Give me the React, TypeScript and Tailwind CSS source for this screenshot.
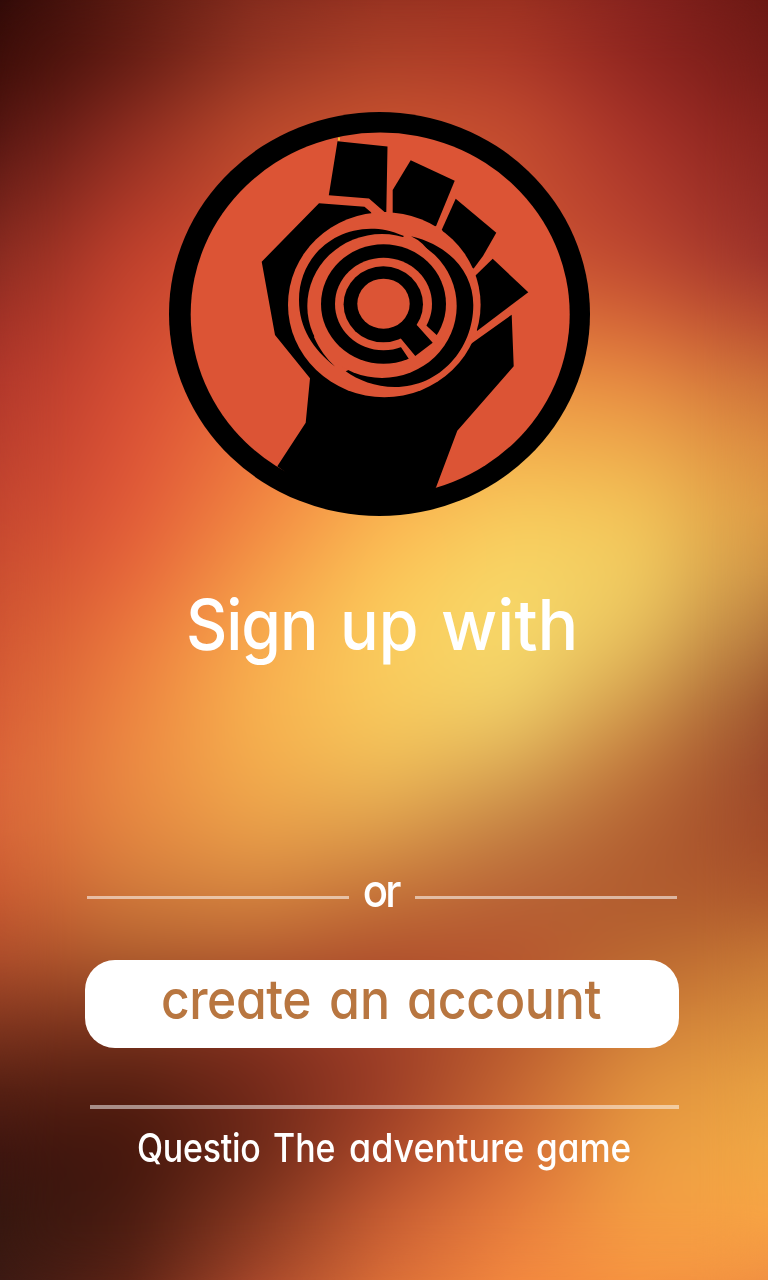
const rows: { y: number; colors: string[] }[] = [
  { y: 0, colors: ["#2f0a08", "#5a1a11", "#822b1d", "#943020", "#98301f", "#84221e", "#6a1813"] },
  { y: 64, colors: ["#3c0d08", "#641c13", "#983624", "#b0442a", "#b03a29", "#902620", "#741c18"] },
  { y: 128, colors: ["#501410", "#8c2b20", "#bb4a2c", "#ca532f", "#c44d30", "#a53028", "#84221c"] },
  { y: 256, colors: ["#862a20", "#c2412d", "#d45033", "#d65a33", "#cf5432", "#bc4630", "#98302a"] },
  { y: 320, colors: ["#9e3026", "#cc4830", "#df5b36", "#e3753a", "#dc7039", "#d46437", "#b64a30"] },
  { y: 384, colors: ["#b0372b", "#d64d34", "#ea693b", "#f0903f", "#ec9643", "#e88c42", "#cb7038"] },
  { y: 448, colors: ["#b93e2d", "#dc5236", "#ee773e", "#f6a448", "#f4b04e", "#eeaa4c", "#da8a40"] },
  { y: 512, colors: ["#c3452f", "#e15938", "#f28641", "#fbb350", "#f8cb5c", "#f3c458", "#dc9844"] },
  { y: 576, colors: ["#c94d30", "#e7663a", "#f59a47", "#fbc658", "#f8d767", "#f1cc61", "#ca8d43"] },
  { y: 640, colors: ["#cf5432", "#ec783d", "#f8ab4d", "#fbcd5d", "#f7da6b", "#e6bd5c", "#b0703a"] },
  { y: 704, colors: ["#d55b35", "#ed8340", "#f8b24f", "#f9cb5d", "#f0d069", "#d29a4c", "#9a502c"] },
  { y: 768, colors: ["#d96238", "#ec8a43", "#f4ad4d", "#f0bd58", "#dcaa56", "#bf733a", "#98452a"] },
  { y: 832, colors: ["#d56338", "#e48640", "#eaa04a", "#dc9c4c", "#c27e42", "#b26032", "#a04828"] },
  { y: 896, colors: ["#c85830", "#d07a3c", "#d4843f", "#c47238", "#b86236", "#b05a2e", "#ae582c"] },
  { y: 960, colors: ["#ad4c2b", "#b05e2d", "#b55c30", "#b0502d", "#b5542e", "#ba6830", "#c87a36"] },
  { y: 1024, colors: ["#81361f", "#7a321d", "#85301f", "#a03e28", "#b8572d", "#d0803a", "#d98f3c"] },
  { y: 1088, colors: ["#562013", "#531e10", "#722819", "#9a3c26", "#c46632", "#e2933e", "#e8a243"] },
  { y: 1152, colors: ["#3d1510", "#43150b", "#6a2818", "#a84528", "#d46a35", "#eb9c42", "#f0a845"] },
  { y: 1216, colors: ["#34170f", "#451a10", "#84361f", "#c85d34", "#e87e3e", "#f5a044", "#f8a544"] },
  { y: 1280, colors: ["#3c1a14", "#602416", "#ac4a2d", "#dc7038", "#f4893f", "#f69240", "#f08f42"] },
];

/** Each row is a horizontal gradient that fades in over the previous one. */
function Backdrop() {
  return (
    <div className="absolute inset-0 overflow-hidden" aria-hidden="true">
      {rows.map((row, i) => (
        <div
          key={row.y}
          className="absolute inset-0"
          style={{
            backgroundImage: `linear-gradient(to right, ${row.colors.join(", ")})`,
            maskImage:
              i === 0
                ? undefined
                : `linear-gradient(to bottom, transparent ${rows[i - 1].y}px, black ${row.y}px)`,
          }}
        />
      ))}
      <div className="absolute inset-0 backdrop-blur-[32px]" />
    </div>
  );
}

function Logo() {
  return (
    <svg viewBox="169 112 421 404" className="mr-[9px] h-[404px] w-[421px] shrink-0" fill="#000">
      <ellipse cx="379.5" cy="314" rx="210.5" ry="202" />
      <ellipse cx="380.2" cy="314.2" rx="189.5" ry="181.7" fill="#dc5435" />
      <rect x="338" y="137.5" width="2" height="3" fill="#f5c52c" />
      <path d="M337.5 141.2 387.5 146.5 386.3 212 384.5 212 369 198.5 328.8 195.3Z" />
      <path d="M410.7 160.3 454.7 180.7 436.3 225.5 420 240 392.7 230V190Z" />
      <path d="M455.7 198.7 496.3 232.7 483 256 473.7 268.5 450 260 442 229.3Z" />
      <path d="M492.7 258.7 528.3 292.3 477 331 465 300 475 276Z" />
      <path d="M319 203.3 364.5 206.7 371 212.3 384 250 430 350 470 344.5 511.7 314.7 513.7 366.3 457.3 430.7 436 487.5 420 505H330L277.3 466.3 305.7 422.7 310 378.3 275 335 261.7 261.7Z" />
      <ellipse cx="384.3" cy="304.7" rx="96.3" ry="92.5" fill="#dc5435" />
      <path d="M404 236C391 230.500 381 228.700 371 228.700C330 229 299 260 299 300C299 328 313 349 335 366.500C326 358 320 350 314 337L340 300Z" />
      <path d="M411 236.200C449 245 473.300 272 473.300 305C473.300 349 440 387 395 387C375 387 358 380 345.700 371.200L360 365L432 256Q424 242 411 236.200Z" />
      <ellipse cx="382" cy="306" rx="74.7" ry="72" fill="#dc5435" />
      <ellipse cx="383.5" cy="304" rx="62.5" ry="59.7" />
      <ellipse cx="383.5" cy="304" rx="48.5" ry="46.3" fill="#dc5435" />
      <path d="M426 325.300 441 339 413 365 401 347.300 390 338 410 318Z" fill="#dc5435" />
      <ellipse cx="383.3" cy="304.3" rx="39.7" ry="38" />
      <path d="M417.700 326 432.700 342.700 415.300 356 401 338.700 392 330 408 316Z" />
      <ellipse cx="383.5" cy="303.7" rx="26.2" ry="25" fill="#dc5435" />
    </svg>
  );
}

export default function App() {
  return (
    <main className="relative isolate h-[1280px] w-[768px] overflow-hidden font-['Inter','Liberation_Sans',sans-serif] text-white [font-feature-settings:'cv11'_1]">
      <Backdrop />
      <div className="relative flex flex-col items-center pt-[112px]">
        <Logo />
        <h1 className="mt-[74px] flex h-[70px] w-[768px] pl-[186px] text-[70px] leading-none font-[480] whitespace-pre">
          <span className="w-[154px] origin-left scale-x-[0.915] tracking-[-1.2px]">Sign </span>
          <span className="w-[101px] origin-left scale-x-[0.92]">up </span>
          <span className="origin-left scale-x-[0.97]">with</span>
        </h1>
        <div className="mt-[207px] mr-1 flex h-[46px] w-[590px] items-center">
          <span className="mt-[15px] h-[3px] w-[262px] bg-white/55" />
          <span className="w-[66px] origin-left scale-x-[0.91] pl-[15px] text-[46px] leading-none font-medium tracking-[-3px]">
            or
          </span>
          <span className="mt-[15px] h-[3px] w-[262px] bg-white/55" />
        </div>
        <button className="mt-[47px] mr-1 flex h-[88px] w-[594px] rounded-[30px] bg-white pt-[12px] pl-[76px] text-left text-[55px] leading-none font-[480] whitespace-pre text-[#b87640]">
          <span className="w-[168px] origin-left scale-x-[0.905] tracking-[-0.5px]">create </span>
          <span className="w-[78px] origin-left scale-x-[0.91]">an </span>
          <span className="origin-left scale-x-[0.91] tracking-[-0.3px]">account</span>
        </button>
        <div className="mt-[57px] ml-[1px] h-[4px] w-[589px] bg-white/50" />
        <p className="mt-[19px] flex w-[768px] pl-[137px] text-[39px] leading-none font-[480] whitespace-pre">
          <span className="w-[136px] origin-left scale-x-[0.87] tracking-[-0.3px]">Questio </span>
          <span className="w-[76px] origin-left scale-x-[0.87]">The </span>
          <span className="w-[187px] origin-left scale-x-[0.92]">adventure </span>
          <span className="origin-left scale-x-[0.9]">game</span>
        </p>
      </div>
    </main>
  );
}
